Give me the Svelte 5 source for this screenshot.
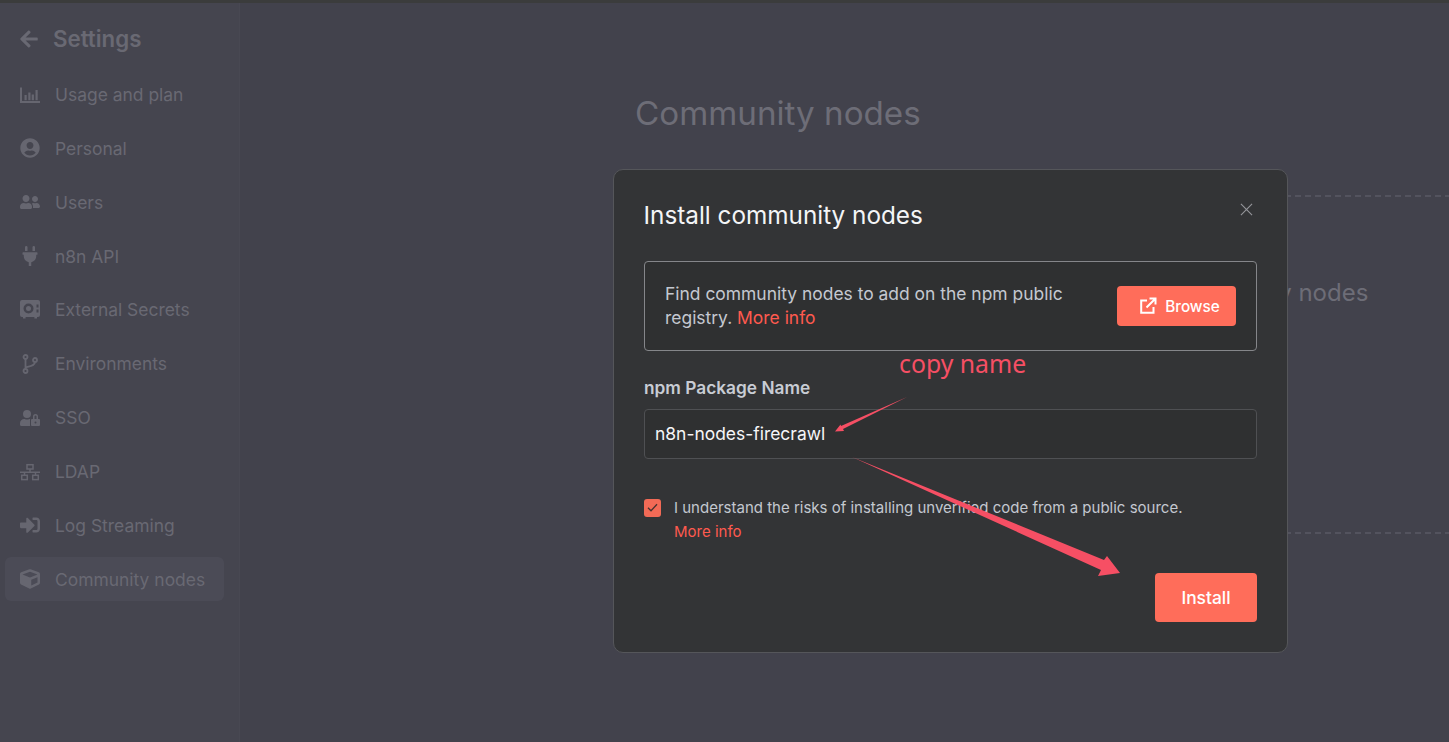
<script>
	const nav = [
		{ label: 'Usage and plan', vb: '0 0 20 20', icon: 'chart' },
		{ label: 'Personal', vb: '0 0 496 512', d: 'M248 8C111 8 0 119 0 256s111 248 248 248 248-111 248-248S385 8 248 8zm0 96c48.6 0 88 39.4 88 88s-39.4 88-88 88-88-39.4-88-88 39.4-88 88-88zm0 344c-58.7 0-111.3-26.6-146.5-68.2 18.8-35.4 55.6-59.8 98.5-59.8 2.4 0 4.8.4 7.1 1.1 13 4.2 26.6 6.9 40.9 6.9 14.3 0 28-2.7 40.9-6.9 2.3-.7 4.7-1.1 7.1-1.1 42.9 0 79.7 24.4 98.5 59.8C359.3 421.4 306.7 448 248 448z' },
		{ label: 'Users', vb: '0 0 640 512', d: 'M192 256c61.9 0 112-50.1 112-112S253.9 32 192 32 80 82.1 80 144s50.1 112 112 112zm76.8 32h-8.3c-20.8 10-43.9 16-68.5 16s-47.6-6-68.5-16h-8.3C51.6 288 0 339.6 0 403.2V432c0 26.5 21.5 48 48 48h288c26.5 0 48-21.5 48-48v-28.8c0-63.6-51.6-115.2-115.2-115.2zM480 256c53 0 96-43 96-96s-43-96-96-96-96 43-96 96 43 96 96 96zm48 32h-3.8c-13.9 4.8-28.6 8-44.2 8s-30.3-3.2-44.2-8H432c-20.4 0-39.2 5.9-55.7 15.4 24.4 26.3 39.7 61.2 39.7 99.8v38.4c0 2.2-.5 4.3-.6 6.4H592c26.5 0 48-21.5 48-48 0-61.9-50.1-112-112-112z' },
		{ label: 'n8n API', vb: '0 0 384 512', d: 'M320,32a32,32,0,0,0-64,0v96h64Zm48,128H16A16,16,0,0,0,0,176v32a16,16,0,0,0,16,16H32v32A160.07,160.07,0,0,0,160,412.8V512h64V412.8A160.07,160.07,0,0,0,352,256V224h16a16,16,0,0,0,16-16V176A16,16,0,0,0,368,160ZM128,32a32,32,0,0,0-64,0v96h64Z' },
		{ label: 'External Secrets', vb: '0 0 20 20', icon: 'vault' },
		{ label: 'Environments', vb: '0 0 20 20', icon: 'branch' },
		{ label: 'SSO', vb: '0 0 640 512', d: 'M224 256A128 128 0 1 0 96 128a128 128 0 0 0 128 128zm96 64a63.08 63.08 0 0 1 8.1-30.5c-4.8-.5-9.5-1.5-14.5-1.5h-16.7a174.08 174.08 0 0 1-145.8 0h-16.7A134.43 134.43 0 0 0 0 422.4V464a48 48 0 0 0 48 48h280.9a63.54 63.54 0 0 1-8.9-32zm288-32h-32v-80a80 80 0 0 0-160 0v80h-32a32 32 0 0 0-32 32v160a32 32 0 0 0 32 32h224a32 32 0 0 0 32-32V320a32 32 0 0 0-32-32zM496 432a32 32 0 1 1 32-32 32 32 0 0 1-32 32zm32-144H464v-80a32 32 0 0 1 64 0z' },
		{ label: 'LDAP', vb: '0 0 20 20', icon: 'network' },
		{ label: 'Log Streaming', vb: '0 0 512 512', d: 'M416 448h-84c-6.6 0-12-5.4-12-12v-40c0-6.6 5.4-12 12-12h84c17.7 0 32-14.3 32-32V160c0-17.7-14.3-32-32-32h-84c-6.6 0-12-5.4-12-12V76c0-6.6 5.4-12 12-12h84c53 0 96 43 96 96v192c0 53-43 96-96 96zm-47-201L201 79c-15-15-41-4.5-41 17v96H24c-13.3 0-24 10.7-24 24v96c0 13.3 10.7 24 24 24h136v96c0 21.5 26 32 41 17l168-168c9.3-9.4 9.3-24.6 0-34z' },
		{ label: 'Community nodes', vb: '0 0 512 512', active: true, d: 'M239.1 6.3l-208 78c-18.7 7-31.1 25-31.1 45v225.1c0 18.2 10.3 34.8 26.5 42.9l208 104c13.5 6.8 29.4 6.8 42.9 0l208-104c16.3-8.1 26.5-24.8 26.5-42.9V129.3c0-20-12.4-37.9-31.1-44.9l-208-78C262 2.2 250 2.2 239.1 6.3zM256 68.4l192 72v1.1l-192 78-192-78v-1.1l192-72zm32 356V275.5l160-65v133.9l-160 80z' }
	];
</script>

<div class="page">
	<div class="topline"></div>
	<div class="shell">
		<aside class="sidebar">
			<div class="back">
				<svg class="back-icon" viewBox="0 0 448 512" fill="currentColor"><path d="M257.5 445.1l-22.2 22.2c-9.4 9.4-24.6 9.4-33.9 0L7 273c-9.4-9.4-9.4-24.6 0-33.9L201.4 44.7c9.4-9.4 24.6-9.4 33.9 0l22.2 22.2c9.5 9.5 9.3 25-.4 34.3L136.6 216H424c13.3 0 24 10.7 24 24v32c0 13.3-10.7 24-24 24H136.6l120.5 114.8c9.8 9.3 10 24.8.4 34.3z" /></svg>
				<span>Settings</span>
			</div>
			<nav class="nav">
				{#each nav as item}
					<div class="nav-item" class:active={item.active}>
						<svg class="nav-icon" viewBox={item.vb} fill="currentColor">
							{#if item.icon === 'chart'}
								<path d="M1 2.500v14.500h19" fill="none" stroke="currentColor" stroke-width="2" />
								<path d="M4.500 10h2.200v5.200H4.500zM8.300 7.500h2.200v7.700H8.300zM11.700 9.500h2.200v5.700h-2.200zM15.500 5h2.200v10.200h-2.200z" />
							{:else if item.icon === 'vault'}
								<path fill-rule="evenodd" d="M2 0h16a2 2 0 0 1 2 2v13a2 2 0 0 1-2 2h-1v1.600h-2.600V17H5.600v1.600H3V17H2a2 2 0 0 1-2-2V2a2 2 0 0 1 2-2zm6.500 3.500a5 5 0 1 0 0 10a5 5 0 0 0 0-10zm0 2.500a2.500 2.500 0 1 1 0 5a2.500 2.500 0 0 1 0-5zM16.500 4.500v3h2v-3zm0 5v3h2v-3z" />
							{:else if item.icon === 'branch'}
								<g fill="none" stroke="currentColor" stroke-width="1.800">
									<circle cx="5.500" cy="3" r="2" />
									<circle cx="5.500" cy="17" r="2" />
									<circle cx="15" cy="6" r="2" />
									<path d="M5.500 5v10M15 8c0 3.500-4 4-9.500 5.500" />
								</g>
							{:else if item.icon === 'network'}
								<g fill="none" stroke="currentColor" stroke-width="1.500">
									<rect x="7" y="2.700" width="6" height="4.300" />
									<rect x="1.700" y="13.300" width="5.600" height="4.300" />
									<rect x="12.700" y="13.300" width="5.600" height="4.300" />
									<path d="M0 10.200h20M10 7v3.200M4.500 10.200v3.100M15.500 10.200v3.100" />
								</g>
							{:else}
								<path d={item.d} />
							{/if}
						</svg>
						<span>{item.label}</span>
					</div>
				{/each}
			</nav>
		</aside>

		<main class="main">
			<h1 class="page-title">Community nodes</h1>
			<div class="empty">
				<p>Supercharge your workflows with community nodes</p>
			</div>
		</main>
	</div>

	<div class="modal">
		<header class="modal-head">
			<h2>Install community nodes</h2>
			<svg class="close" viewBox="0 0 14 14" fill="none" stroke="currentColor" stroke-width="1.200"><path d="M1 1l12 12M13 1L1 13" /></svg>
		</header>

		<div class="info">
			<p>Find community nodes to add on the npm public registry. <a href="#top">More info</a></p>
			<button class="browse">
				<svg viewBox="0 0 18 18" fill="none" stroke="currentColor" stroke-width="2"><path d="M8 3.500H2.200v12.300h12.300V10M7.500 10.500L16 2M10.500 1.600h6v6" /></svg>
				Browse
			</button>
		</div>

		<div class="field-label">npm Package Name</div>
		<div class="field">n8n-nodes-firecrawl</div>

		<div class="consent">
			<span class="check">
				<svg viewBox="0 0 17 17" fill="none" stroke="currentColor" stroke-width="1.300"><path d="M4 8.800l3 3 6-6.500" /></svg>
			</span>
			<div>
				I understand the risks of installing unverified code from a public source.
				<a href="#top">More info</a>
			</div>
		</div>

		<footer class="modal-foot">
			<button class="install">Install</button>
		</footer>
	</div>

	<!-- screenshot annotation on top of the modal -->
	<span class="note">copy name</span>
	<svg class="arrows" viewBox="0 0 1449 742" fill="#f64f64">
		<polygon points="907,397 841,426 840.500,424.500 835,431.500 844,431 843,429" />
		<polygon points="852,457 1104,560 1107,556 1120,573 1098,576 1101,570" />
	</svg>
</div>

<style>
	:global(body) {
		background: #42424c;
	}

	.page {
		position: relative;
		width: 1449px;
		height: 742px;
		overflow: hidden;
		display: flex;
		flex-direction: column;
		font-family: Inter, 'Noto Sans', sans-serif;
		background: #42424c;
	}

	.topline {
		height: 3px;
		flex: none;
		background: #3b3c3c;
	}

	.shell {
		flex: 1;
		display: flex;
		min-height: 0;
	}

	.sidebar {
		width: 240px;
		flex: none;
		box-sizing: border-box;
		background: #45454f;
		border-right: 1px solid #484852;
		padding: 22px 15px 0 5px;
		color: #65656f;
	}

	.back {
		display: flex;
		align-items: center;
		height: 27px;
		padding-left: 15px;
		font-size: 22.300px;
		font-weight: 600;
		color: #696973;
	}

	.back-icon {
		width: 18px;
		height: 20px;
		margin-right: 15px;
	}

	.nav {
		margin-top: 20.600px;
		display: flex;
		flex-direction: column;
		gap: 9.850px;
	}

	.nav-item {
		display: flex;
		align-items: center;
		height: 44px;
		padding-left: 15px;
		border-radius: 6px;
		font-size: 17.450px;
		color: #696973;
	}

	.nav-item.active {
		background: #4b4b56;
	}

	.nav-icon {
		width: 20px;
		height: 20px;
		margin-right: 15px;
		flex: none;
		color: #666670;
	}

	.main {
		flex: 1;
		min-width: 0;
		padding: 87px 0 0 395px;
	}

	.page-title {
		margin: 0;
		font-size: 33.200px;
		line-height: 46px;
		font-weight: 400;
		color: #6d6d77;
		white-space: nowrap;
	}

	.empty {
		box-sizing: border-box;
		width: 876px;
		height: 338.500px;
		margin-top: 59px;
		border-top: 2px dashed #53535e;
		border-bottom: 2px dashed #53535e;
		padding-top: 79px;
		text-align: center;
		white-space: nowrap;
	}

	.empty p {
		margin: 0;
		font-size: 24px;
		line-height: 34px;
		color: #6d6d77;
	}

	.modal {
		position: absolute;
		left: 613px;
		top: 169px;
		width: 675px;
		height: 484px;
		box-sizing: border-box;
		padding: 27px 30px 30px;
		background: #333436;
		border: 1px solid #55565a;
		border-radius: 10px;
		display: flex;
		flex-direction: column;
		color: #c4c8d0;
	}

	.modal-head {
		display: flex;
		justify-content: space-between;
		align-items: flex-start;
		height: 36px;
	}

	.modal-head h2 {
		margin: 0 0 0 -0.500px;
		font-size: 24.300px;
		line-height: 36px;
		font-weight: 400;
		color: #f4f5f7;
	}

	.close {
		width: 13px;
		height: 13px;
		margin-top: 6px;
		margin-right: 4px;
		color: #94959a;
	}

	.info {
		margin-top: 28px;
		height: 90px;
		box-sizing: border-box;
		display: flex;
		align-items: center;
		justify-content: space-between;
		padding: 0 20px;
		background: #2f3031;
		border: 1px solid #85868a;
		border-radius: 4px;
	}

	.info p {
		margin: 0;
		width: 420px;
		font-size: 17.450px;
		line-height: 24px;
	}

	a {
		color: #ff5a4f;
		text-decoration: none;
	}

	button {
		border: 0;
		font-family: inherit;
		color: #fff;
		background: #ff6d5a;
		border-radius: 4px;
		font-weight: 500;
	}

	.browse {
		width: 119px;
		height: 40px;
		display: flex;
		align-items: center;
		justify-content: center;
		gap: 8px;
		padding: 0 0 0 6px;
		font-size: 15.300px;
	}

	.browse svg {
		width: 18px;
		height: 18px;
	}

	.field-label {
		margin-top: 26px;
		font-size: 17.300px;
		line-height: 22px;
		font-weight: 600;
		color: #c8ccd4;
	}

	.field {
		margin-top: 10px;
		height: 50px;
		box-sizing: border-box;
		padding: 0 10px 2px;
		display: flex;
		align-items: center;
		background: #2f3031;
		border: 1px solid #4f5053;
		border-radius: 4px;
		font-size: 17.450px;
		color: #f6f6f8;
	}

	.consent {
		margin-top: 36.600px;
		display: flex;
		gap: 13px;
		font-size: 15px;
		line-height: 24px;
	}

	.consent a {
		display: block;
	}

	.check {
		width: 17px;
		height: 18px;
		margin-top: 3.500px;
		flex: none;
		background: #f26a56;
		border-radius: 3px;
		color: #45322f;
	}

	.check svg {
		display: block;
		width: 17px;
		height: 17px;
	}

	.modal-foot {
		margin-top: auto;
		display: flex;
		justify-content: flex-end;
	}

	.install {
		width: 102px;
		height: 49px;
		font-size: 17.400px;
	}

	.note {
		position: absolute;
		left: 899px;
		top: 346px;
		font-family: 'Noto Sans', sans-serif;
		font-size: 24.800px;
		line-height: 34px;
		color: #f64f64;
	}

	.arrows {
		position: absolute;
		inset: 0;
		width: 1449px;
		height: 742px;
		pointer-events: none;
	}
</style>
